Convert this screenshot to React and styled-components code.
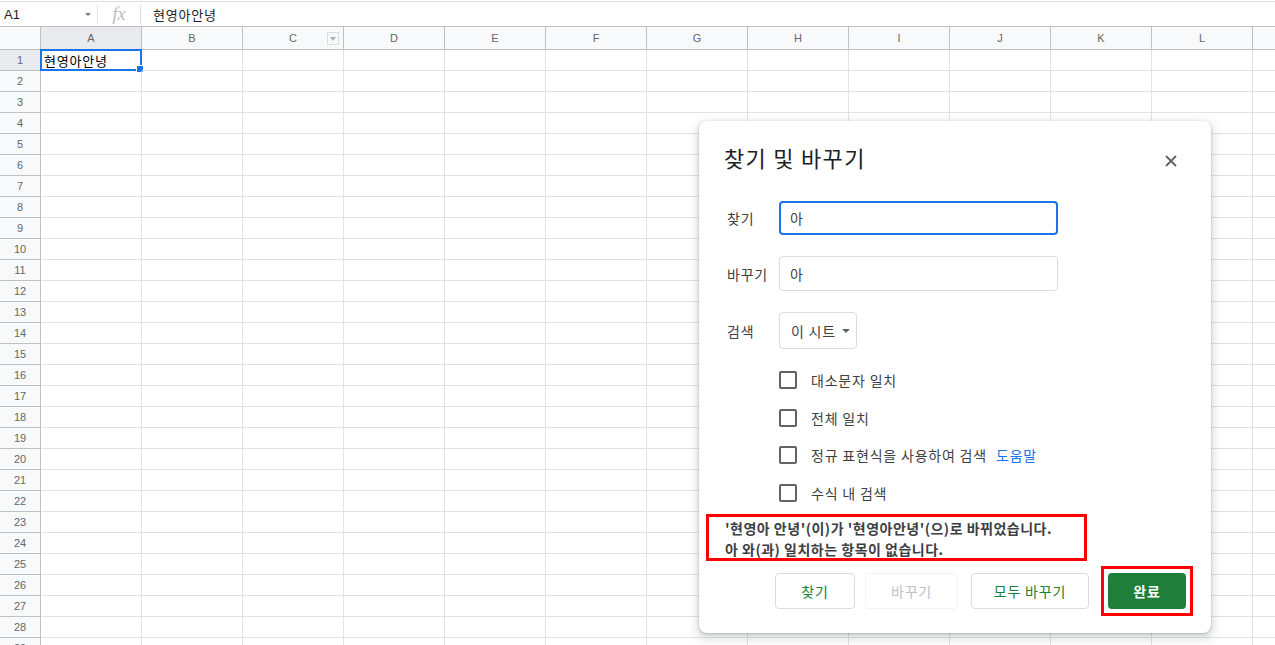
import React from "react";
import styled, { createGlobalStyle } from "styled-components";

const Global = createGlobalStyle`
  html, body { margin: 0; padding: 0; background: #fff; overflow: hidden; }
  body { font-family: "Liberation Sans", "Noto Sans CJK KR", Arial, sans-serif; }
  * { box-sizing: border-box; }
`;

const KR = `"Noto Sans CJK KR", "Liberation Sans", sans-serif`;

const Page = styled.div`
  position: relative;
  width: 1275px;
  height: 645px;
  overflow: hidden;
`;

const FormulaBar = styled.div`
  display: flex;
  align-items: center;
  height: 25px;
  margin-top: 1px;
  border-top: 1px solid #e0e0e0;
`;

const NameBox = styled.div`
  display: flex;
  align-items: center;
  justify-content: space-between;
  width: 98px;
  padding: 0 6px 0 4px;
  font-size: 13px;
  color: #202124;
  border-right: 1px solid #e0e0e0;
  height: 19px;
`;

const Caret = styled.span`
  width: 0;
  height: 0;
  border-left: ${(p) => p.$s || 3}px solid transparent;
  border-right: ${(p) => p.$s || 3}px solid transparent;
  border-top: ${(p) => p.$s || 3}px solid ${(p) => p.$c || "#777"};
`;

const Fx = styled.div`
  width: 43px;
  height: 19px;
  display: flex;
  align-items: center;
  justify-content: center;
  font-family: "Liberation Serif", serif;
  font-style: italic;
  font-size: 18px;
  color: #bbb;
  border-right: 1px solid #e0e0e0;
`;

const FormulaText = styled.div`
  padding-left: 12px;
  font-family: ${KR};
  font-size: 13px;
  letter-spacing: 0.8px;
  color: #202124;
`;

const Row = styled.div`
  display: flex;
  height: ${(p) => p.$h}px;
`;

const Corner = styled.div`
  width: 41px;
  flex: none;
  background: #f8f9fa;
  border-right: 1px solid #c0c0c0;
  border-bottom: 1px solid #c0c0c0;
  border-top: 1px solid #c0c0c0;
`;

const ColHeader = styled.div`
  position: relative;
  width: 101px;
  flex: none;
  display: flex;
  align-items: center;
  justify-content: center;
  background: ${(p) => (p.$sel ? "#e8eaed" : "#f8f9fa")};
  border-right: 1px solid #c0c0c0;
  border-bottom: 1px solid #c0c0c0;
  border-top: 1px solid #c0c0c0;
  font-size: 11px;
  color: #666;
`;

const FilterBtn = styled.span`
  position: absolute;
  right: 4px;
  top: 5px;
  width: 12px;
  height: 13px;
  border: 1px solid #dadce0;
  display: flex;
  align-items: center;
  justify-content: center;
  &::after {
    content: "";
    border-left: 3px solid transparent;
    border-right: 3px solid transparent;
    border-top: 4px solid #b0b0b0;
  }
`;

const RowHeader = styled.div`
  width: 41px;
  flex: none;
  display: flex;
  align-items: center;
  justify-content: center;
  background: ${(p) => (p.$sel ? "#e8eaed" : "#f8f9fa")};
  border-right: 1px solid #c0c0c0;
  border-bottom: 1px solid #c0c0c0;
  font-size: 11px;
  color: #666;
`;

const Cell = styled.div`
  position: relative;
  width: 101px;
  flex: none;
  border-right: 1px solid #e2e2e2;
  border-bottom: 1px solid #e2e2e2;
  font-family: ${KR};
  font-size: 13px;
  letter-spacing: 0.8px;
  color: #000;
  padding-left: 3px;
  display: flex;
  align-items: center;
`;

const Selection = styled.div`
  position: absolute;
  left: -1px;
  top: -1px;
  right: -1px;
  bottom: -1px;
  border: 2px solid #1a73e8;
  &::after {
    content: "";
    position: absolute;
    right: -4px;
    bottom: -4px;
    width: 6px;
    height: 6px;
    background: #1a73e8;
    border: 1px solid #fff;
  }
`;

const Dialog = styled.div`
  position: absolute;
  left: 699px;
  top: 121px;
  width: 512px;
  height: 512px;
  background: #fff;
  border-radius: 8px;
  box-shadow: 0 4px 8px 3px rgba(60, 64, 67, 0.15), 0 1px 3px rgba(60, 64, 67, 0.3);
  padding: 24px 24px 0 25px;
  font-family: ${KR};
  letter-spacing: 0.8px;
`;

const TitleBar = styled.div`
  display: flex;
  align-items: center;
  justify-content: space-between;
  height: 24px;
`;

const Title = styled.div`
  font-size: 22px;
  letter-spacing: 1.3px;
  color: #202124;
`;

const Close = styled.div`
  width: 16px;
  height: 16px;
  margin-right: 8px;
  margin-top: 2px;
`;

const FieldRow = styled.div`
  display: flex;
  align-items: center;
  margin-top: ${(p) => p.$mt}px;
`;

const Label = styled.div`
  width: 55px;
  padding-left: 3px;
  font-size: 14px;
  color: #3c4043;
`;

const Input = styled.div`
  width: 279px;
  height: ${(p) => (p.$focus ? 34 : 35)}px;
  border: ${(p) => (p.$focus ? "2px solid #1a73e8" : "1px solid #dadce0")};
  border-radius: 4px;
  display: flex;
  align-items: center;
  padding-left: ${(p) => (p.$focus ? 9 : 10)}px;
  font-size: 14px;
  color: #3c4043;
`;

const Select = styled.div`
  width: 78px;
  height: 37px;
  border: 1px solid #dadce0;
  border-radius: 4px;
  display: flex;
  align-items: center;
  gap: 6px;
  padding-left: 11px;
  font-size: 14px;
  color: #3c4043;
`;

const Checks = styled.div`
  margin-top: 12px;
  padding-left: 55px;
`;

const CheckRow = styled.div`
  display: flex;
  align-items: center;
  height: 37.7px;
`;

const Box = styled.span`
  width: 18px;
  height: 18px;
  border: 2px solid #5f6368;
  border-radius: 2px;
  margin-right: 14px;
  flex: none;
`;

const CheckText = styled.span`
  font-size: 14px;
  color: #3c4043;
`;

const Link = styled.span`
  margin-left: 9px;
  color: #1a73e8;
  font-size: 14px;
`;

const Message = styled.div`
  margin: 2px 0 0 -18px;
  width: 381px;
  height: 47px;
  border: 3px solid #ff0000;
  padding: 1px 0 0 16px;
  font-size: 14px;
  font-weight: 700;
  line-height: 21px;
  letter-spacing: 0.5px;
  color: #3c4043;
`;

const Buttons = styled.div`
  display: flex;
  align-items: center;
  justify-content: flex-end;
  margin-top: 5px;
  margin-right: -6px;
`;

const Btn = styled.div`
  width: ${(p) => p.$w}px;
  height: 36px;
  margin-right: ${(p) => p.$mr}px;
  border: 1px solid ${(p) => (p.$disabled ? "#f1f3f4" : "#dadce0")};
  border-radius: 4px;
  display: flex;
  align-items: center;
  justify-content: center;
  font-size: 14px;
  color: ${(p) => (p.$disabled ? "#bdc1c6" : "#188038")};
`;

const Highlight = styled.div`
  border: 3px solid #ff0000;
  padding: 4px;
`;

const Primary = styled.div`
  width: 78px;
  height: 36px;
  border-radius: 4px;
  background: #1e7e3a;
  color: #fff;
  font-weight: 700;
  font-size: 14px;
  display: flex;
  align-items: center;
  justify-content: center;
`;

const cols = ["A", "B", "C", "D", "E", "F", "G", "H", "I", "J", "K", "L", "M"];
const rows = Array.from({ length: 29 }, (_, i) => i + 1);

export default function App() {
  return (
    <Page>
      <Global />
      <FormulaBar>
        <NameBox>
          <span>A1</span>
          <Caret />
        </NameBox>
        <Fx>fx</Fx>
        <FormulaText>현영아안녕</FormulaText>
      </FormulaBar>
      <Row $h={24}>
        <Corner />
        {cols.map((c) => (
          <ColHeader key={c} $sel={c === "A"}>
            {c !== "M" && c}
            {c === "C" && <FilterBtn />}
          </ColHeader>
        ))}
      </Row>
      {rows.map((r) => (
        <Row key={r} $h={21}>
          <RowHeader $sel={r === 1}>{r}</RowHeader>
          {cols.map((c) => (
            <Cell key={c}>
              {r === 1 && c === "A" && (
                <>
                  현영아안녕
                  <Selection />
                </>
              )}
            </Cell>
          ))}
        </Row>
      ))}

      <Dialog>
        <TitleBar>
          <Title>찾기 및 바꾸기</Title>
          <Close>
            <svg width="16" height="16" viewBox="0 0 16 16">
              <path d="M3 3 L13 13 M13 3 L3 13" stroke="#5f6368" strokeWidth="1.8" />
            </svg>
          </Close>
        </TitleBar>
        <FieldRow $mt={32}>
          <Label>찾기</Label>
          <Input $focus>아</Input>
        </FieldRow>
        <FieldRow $mt={21}>
          <Label>바꾸기</Label>
          <Input>아</Input>
        </FieldRow>
        <FieldRow $mt={21}>
          <Label>검색</Label>
          <Select>
            이 시트
            <Caret $s={4} $c="#5f6368" />
          </Select>
        </FieldRow>
        <Checks>
          <CheckRow>
            <Box />
            <CheckText>대소문자 일치</CheckText>
          </CheckRow>
          <CheckRow>
            <Box />
            <CheckText>전체 일치</CheckText>
          </CheckRow>
          <CheckRow>
            <Box />
            <CheckText>정규 표현식을 사용하여 검색</CheckText>
            <Link>도움말</Link>
          </CheckRow>
          <CheckRow>
            <Box />
            <CheckText>수식 내 검색</CheckText>
          </CheckRow>
        </Checks>
        <Message>
          '현영아 안녕'(이)가 '현영아안녕'(으)로 바뀌었습니다.
          <br />
          아 와(과) 일치하는 항목이 없습니다.
        </Message>
        <Buttons>
          <Btn $w={80} $mr={10}>찾기</Btn>
          <Btn $w={93} $mr={13} $disabled>바꾸기</Btn>
          <Btn $w={118} $mr={12}>모두 바꾸기</Btn>
          <Highlight>
            <Primary>완료</Primary>
          </Highlight>
        </Buttons>
      </Dialog>
    </Page>
  );
}
